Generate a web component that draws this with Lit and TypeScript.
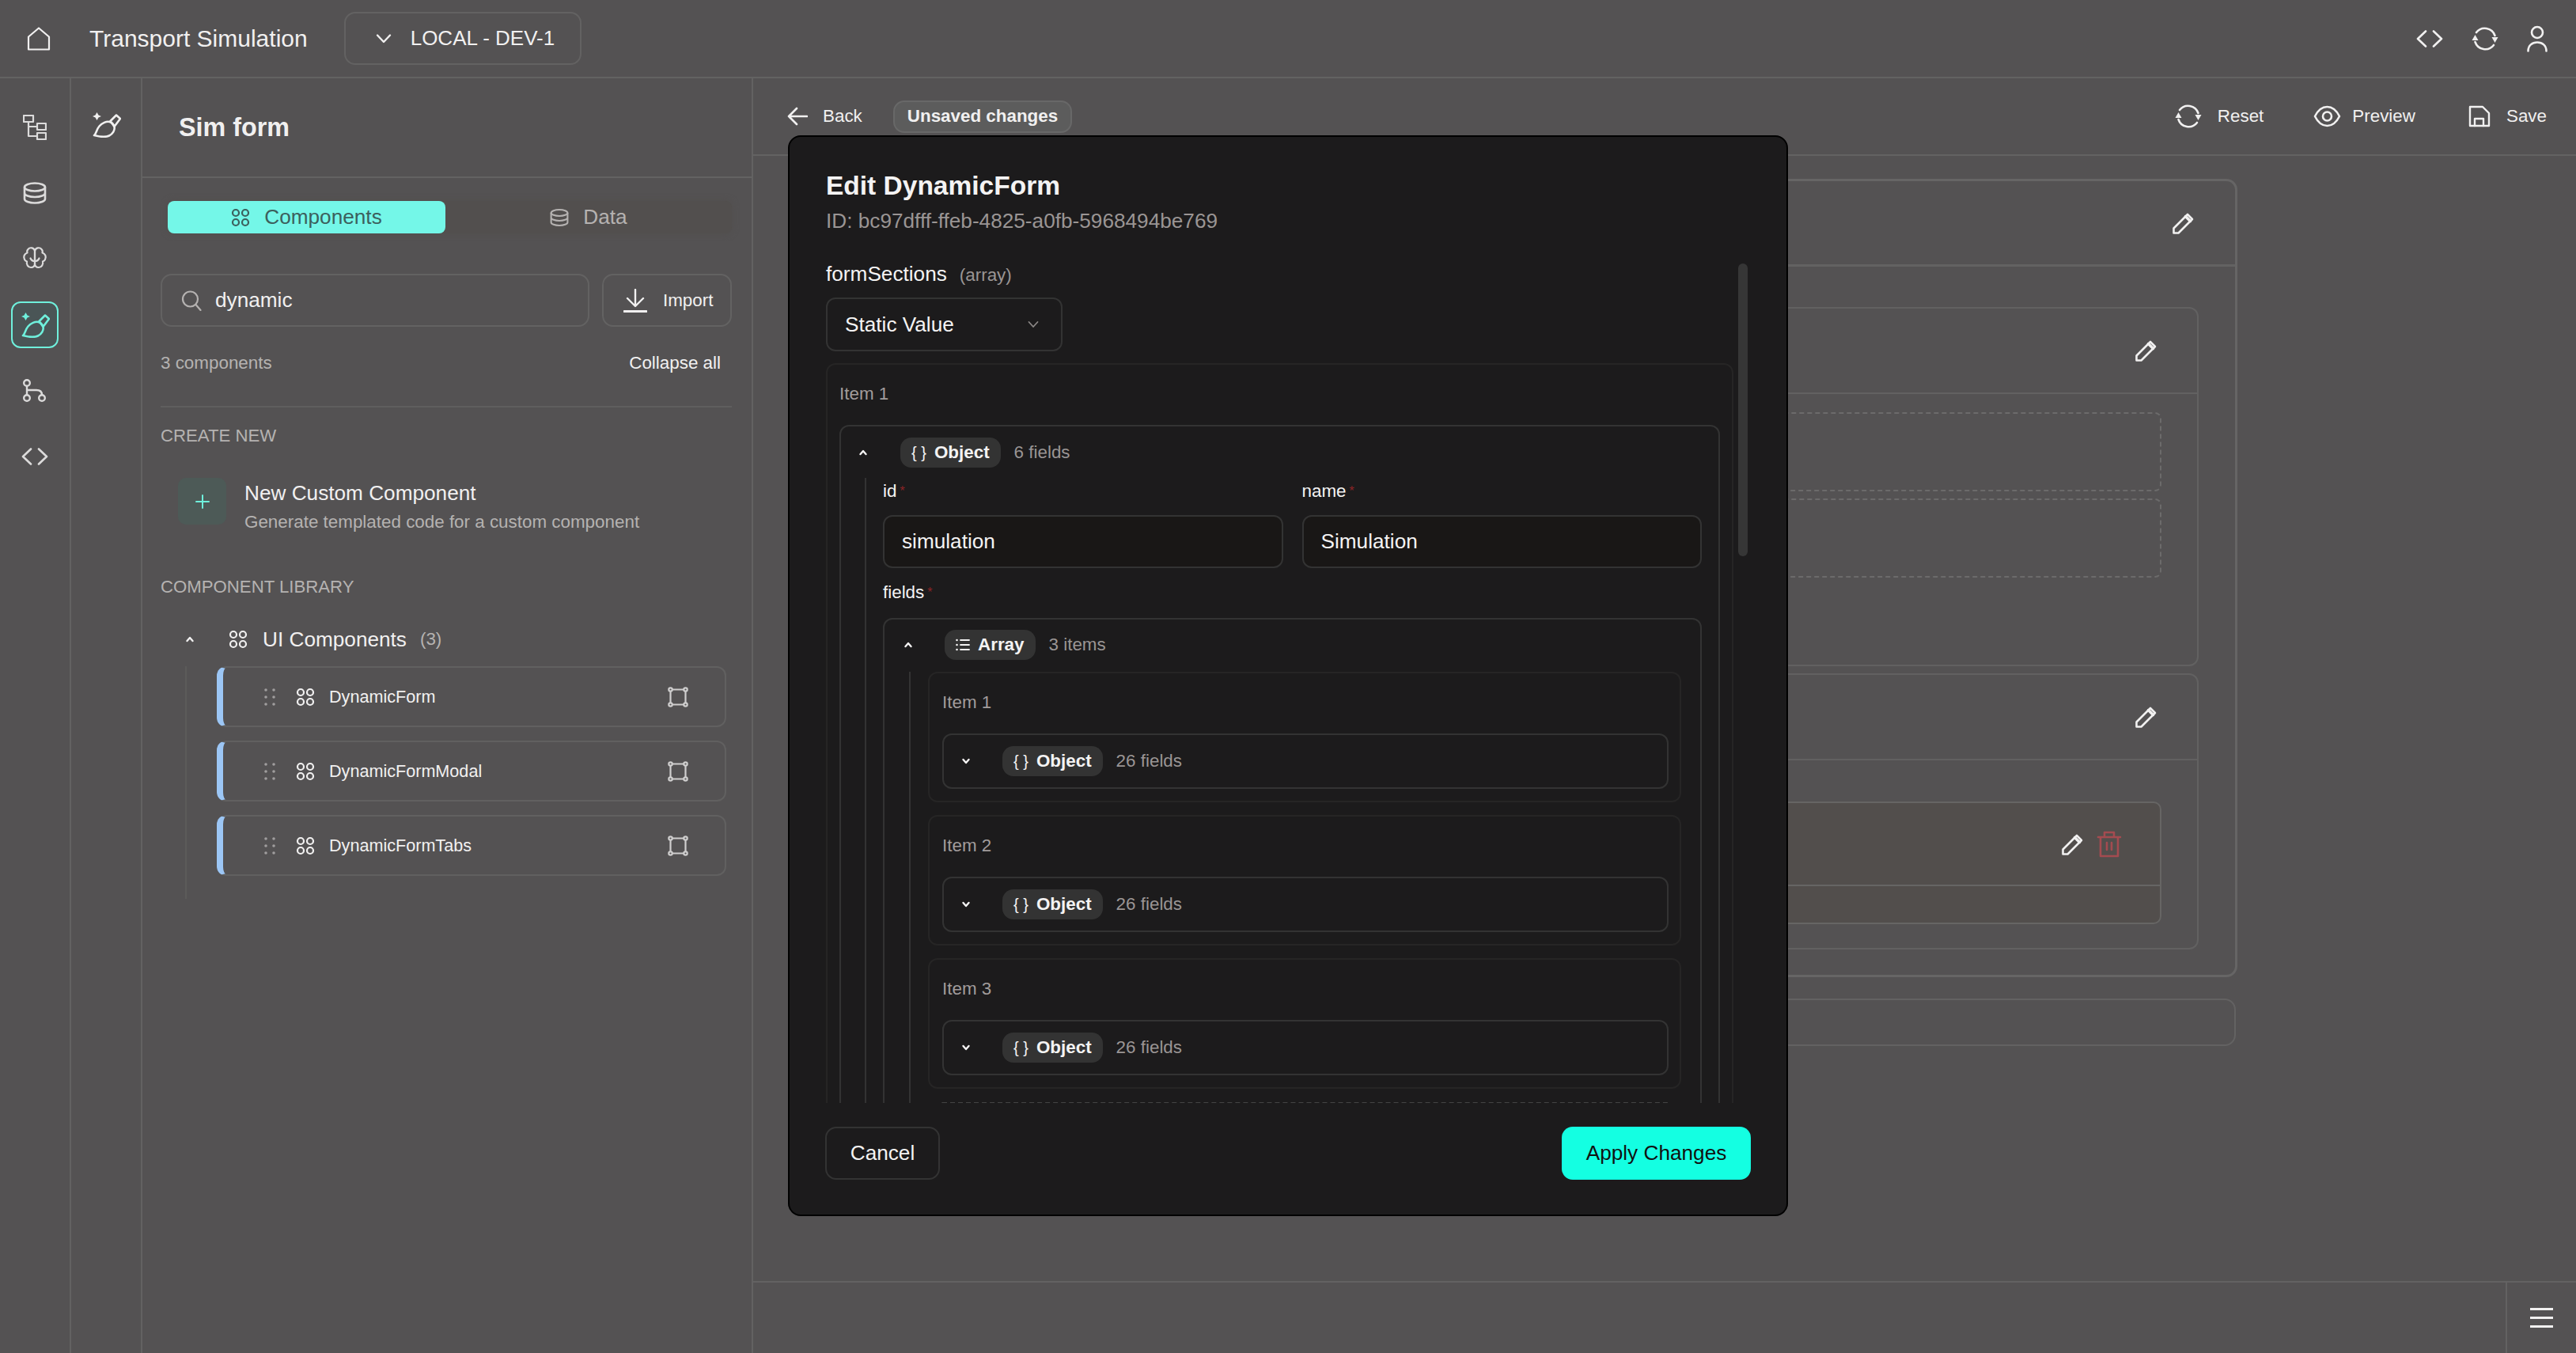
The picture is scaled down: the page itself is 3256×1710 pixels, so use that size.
import { LitElement, html, css, svg } from "lit";
import { customElement } from "lit/decorators.js";

const icon = (w: number, h: number, body: unknown, sw = 2.2) => html`<svg
  class="ic"
  width=${w}
  height=${h}
  viewBox="0 0 ${w} ${h}"
  fill="none"
  stroke="currentColor"
  stroke-width=${sw}
  stroke-linecap="round"
  stroke-linejoin="round"
>
  ${body}
</svg>`;

const homeIcon = icon(30, 30, svg`<path d="M2 12.5 15 1.5l13 11V28.5H2z"/>`);
const codeIcon = icon(34, 22, svg`<path d="M12 1.5 2 11l10 9.5M22 1.5 32 11l-10 9.5"/>`, 2.6);
const refreshIcon = icon(
  34,
  34,
  svg`<path d="M6 9A13.5 13.5 0 0 1 29.5 13"/><path d="M28 25A13.5 13.5 0 0 1 4.5 21"/>
    <path d="M25.5 15h8l-4 7z" fill="currentColor" stroke="none"/><path d="M.5 19h8l-4-7z" fill="currentColor" stroke="none"/>`,
  2.6,
);
const userIcon = icon(26, 34, svg`<circle cx="13" cy="9" r="7"/><path d="M1.5 32.5c0-7 5-11 11.5-11s11.5 4 11.5 11"/>`, 2.6);
const chevDown = icon(20, 14, svg`<path d="M2 2.5 10 11l8-8.5"/>`, 2.4);
const treeIcon = icon(
  30,
  32,
  svg`<rect x="1" y="1" width="12" height="8"/><rect x="18" y="11" width="11" height="8"/><rect x="18" y="23" width="11" height="8"/><path d="M7 9v18h11M7 15h11"/>`,
);
const dbIcon = (w = 30, h = 28) =>
  html`<svg class="ic" width=${w} height=${h} viewBox="0 0 30 28" fill="none" stroke="currentColor" stroke-width="2.6">
    <ellipse cx="15" cy="6.5" rx="13" ry="5" />
    <path d="M2 6.5v15c0 2.8 5.8 5 13 5s13-2.2 13-5v-15M2 14c0 2.8 5.8 5 13 5s13-2.2 13-5" />
  </svg>`;
const brainIcon = icon(
  32,
  32,
  svg`<path d="M16 6c-1-4-6-5-8.500-2-1 1-1.500 3-1 4.500-3.500 1-5.500 5-3.500 8.500.5 1 1.500 2 3 2.500-1 3.500 1.500 7.500 5 7.500 3 0 5-2 5-5z"/>
    <path d="M16 6c1-4 6-5 8.500-2 1 1 1.500 3 1 4.500 3.500 1 5.500 5 3.500 8.500-.5 1-1.500 2-3 2.500 1 3.500-1.500 7.500-5 7.500-3 0-5-2-5-5z"/>
    <path d="M16 19c-2.500 0-4.500-1-5.500-3.500M16 19c2.500 0 4.500-1 5.500-3.500"/>`,
);
const wandIcon = icon(
  37,
  32,
  svg`<path d="M6.500 0l2 3.500 3.500 1.500-3.500 1.500-2 3.500-2-3.500L1 5l3.500-1.500z" fill="currentColor" stroke="none"/>
    <path d="M3 29c2.500-1.500 3-7.500 6.500-11.500 3.500-4 9-6.500 13-5.500 2 .5 5 3 6 6 1 4.500-2 9.500-6.500 11.500-5 2.500-11.500 1.500-19-.5z"/>
    <path d="M23.500 11 31 3.500l5 4.500-7.500 10z"/>`,
  2.6,
);
const forkIcon = icon(
  32,
  32,
  svg`<circle cx="6" cy="6" r="3.800"/><circle cx="6" cy="25" r="3.800"/><circle cx="25" cy="25" r="3.800"/><path d="M6 10v11M6 15h12c4 0 7 2 7 6"/>`,
  2.4,
);
const compIcon = icon(
  24,
  24,
  svg`<circle cx="6" cy="6" r="4"/><circle cx="18" cy="6" r="4"/><circle cx="6" cy="18" r="4"/><circle cx="18" cy="18" r="4"/>`,
);
const searchIcon = icon(26, 26, svg`<circle cx="11.500" cy="11" r="9.500"/><path d="m18.500 18 6 7"/>`);
const importIcon = icon(30, 30, svg`<path d="M15 1v20M5 12l10 10 10-10"/><path d="M1 28.500h28" stroke-width="3"/>`, 2.4);
const plusIcon = icon(18, 18, svg`<path d="M9 1v16M1 9h16"/>`, 2);
const chevUpSm = icon(12, 10, svg`<path d="M2.500 7 6 3l3.500 4"/>`, 2.4);
const chevDownSm = icon(12, 10, svg`<path d="M2.500 3 6 7l3.500-4"/>`, 2.4);
const dotsIcon = icon(
  14,
  22,
  svg`<g fill="currentColor" stroke="none"><circle cx="2" cy="2" r="1.800"/><circle cx="12" cy="2" r="1.800"/><circle cx="2" cy="11" r="1.800"/><circle cx="12" cy="11" r="1.800"/><circle cx="2" cy="20" r="1.800"/><circle cx="12" cy="20" r="1.800"/></g>`,
);
const frameIcon = icon(
  26,
  26,
  svg`<path d="M6 3.500h14M6 22.500h14M3.500 6v14M22.500 6v14"/><circle cx="3.500" cy="3.500" r="2.200"/><circle cx="22.500" cy="3.500" r="2.200"/><circle cx="3.500" cy="22.500" r="2.200"/><circle cx="22.500" cy="22.500" r="2.200"/>`,
);
const backIcon = icon(26, 26, svg`<path d="M12 3 2 13l10 10M2 13h23"/>`, 2.6);
const eyeIcon = icon(35, 28, svg`<path d="M2 14C6 6 11 2 17.500 2S29 6 33 14c-4 8-9 12-15.500 12S6 22 2 14z"/><circle cx="17.500" cy="14" r="5.500"/>`, 2.6);
const saveIcon = icon(28, 28, svg`<path d="M2 2h16l8 8v16H2z"/><path d="M8 26v-9h11v9"/>`, 2.4);
const pencilIcon = icon(
  30,
  30,
  svg`<path d="M2.500 27.500v-6L20 4l6 6L8.500 27.500z"/><path d="m17.500 6.500 6 6" stroke-width="3.500"/>`,
  2.6,
);
const trashIcon = icon(
  32,
  34,
  svg`<path d="M2 8h28M5 8v24h22V8M10 8V2h12v6M13 15v9M19 15v9"/>`,
  2.6,
);
const listIcon = icon(
  18,
  18,
  svg`<path d="M6 3h11M6 9h11M6 15h11"/><g fill="currentColor" stroke="none"><circle cx="1.500" cy="3" r="1.300"/><circle cx="1.500" cy="9" r="1.300"/><circle cx="1.500" cy="15" r="1.300"/></g>`,
  1.8,
);

@customElement("app-root")
export class AppRoot extends LitElement {
  static styles = css`
    :host {
      display: block;
      width: 3256px;
      height: 1710px;
      position: relative;
      overflow: hidden;
      background: #545253;
      color: #f1f0f0;
      font-family: "Liberation Sans", Arial, sans-serif;
      font-size: 26.2px;
    }
    * {
      box-sizing: border-box;
    }
    .ic {
      display: block;
      flex: none;
    }
    .app {
      display: flex;
      flex-direction: column;
      height: 1710px;
    }

    /* top bar */
    .top {
      height: 99px;
      flex: none;
      display: flex;
      align-items: center;
      padding: 0 36px 0 34px;
      border-bottom: 2px solid #636262;
    }
    .brand {
      font-size: 30px;
      margin: 0 46px 0 49px;
    }
    .env {
      width: 300px;
      height: 67px;
      display: flex;
      align-items: center;
      gap: 24px;
      padding-left: 38px;
      border: 2px solid #636262;
      border-radius: 14px;
      font-size: 26px;
    }
    .top-right {
      margin-left: auto;
      display: flex;
      align-items: center;
      gap: 36px;
    }

    /* left rails */
    .body {
      flex: 1;
      display: flex;
      min-height: 0;
    }
    .rail {
      width: 90px;
      flex: none;
      border-right: 2px solid #636262;
      display: flex;
      flex-direction: column;
      align-items: center;
      gap: 24.4px;
      padding-top: 32px;
      color: #dcdbdb;
    }
    .rail-item {
      width: 60px;
      height: 59px;
      display: flex;
      align-items: center;
      justify-content: center;
      border-radius: 12px;
      border: 2px solid transparent;
    }
    .rail-item.on {
      color: #6ff0dc;
      border-color: #6ff0dc;
      background: #4a5556;
    }
    .rail.two {
      padding-top: 43px;
      color: #f1f0f0;
    }

    /* component panel */
    .panel {
      width: 772px;
      flex: none;
      border-right: 2px solid #636262;
      display: flex;
      flex-direction: column;
    }
    .panel-head {
      height: 126px;
      flex: none;
      display: flex;
      align-items: center;
      padding-left: 46px;
      border-bottom: 2px solid #636262;
      font-size: 32.3px;
      font-weight: 700;
    }
    .panel-body {
      padding: 0 25px 0 23px;
    }
    .tabs {
      margin: 29px 0 0 9px;
      height: 41px;
      display: flex;
      background: #524f4e;
      border-radius: 8px;
      box-shadow: 0 0 8px #524f4e;
    }
    .tab {
      flex: 1;
      display: flex;
      align-items: center;
      justify-content: center;
      gap: 18px;
      color: #b5b2b1;
      border-radius: 8px;
    }
    .tab.on {
      flex: none;
      width: 351px;
      background: #74f7e8;
      color: #3c605d;
    }
    .search-row {
      margin-top: 51px;
      display: flex;
      gap: 16px;
      height: 67px;
    }
    .search {
      flex: 1;
      display: flex;
      align-items: center;
      gap: 17px;
      padding-left: 24px;
      border: 2px solid #636262;
      border-radius: 14px;
    }
    .search .ic {
      color: #b5b2b1;
    }
    .import {
      width: 164px;
      display: flex;
      align-items: center;
      gap: 20px;
      padding-left: 25px;
      border: 2px solid #636262;
      border-radius: 14px;
      font-size: 22.4px;
    }
    .count-row {
      margin-top: 33px;
      display: flex;
      justify-content: space-between;
      padding-right: 14px;
      font-size: 22.4px;
      line-height: 26px;
    }
    .muted {
      color: #b5b2b1;
    }
    .rule {
      margin: 41px 0 23px;
      border-top: 2px solid #5f5e5e;
    }
    .section {
      font-size: 22.2px;
      line-height: 26px;
      color: #b5b2b1;
    }
    .new-row {
      margin: 40px 0 0 22px;
      display: flex;
      gap: 23px;
    }
    .new-box {
      width: 61px;
      height: 59px;
      display: flex;
      align-items: center;
      justify-content: center;
      background: #4d5a57;
      border-radius: 10px;
      color: #6ff0dc;
    }
    .new-title {
      margin-top: 4px;
      line-height: 30px;
    }
    .new-sub {
      margin-top: 9px;
      font-size: 22.4px;
      line-height: 26px;
      color: #b5b2b1;
    }
    .lib {
      margin-top: 56px;
    }
    .group {
      margin-top: 38px;
      height: 30px;
      display: flex;
      align-items: center;
      padding-left: 31px;
    }
    .group > .ic:first-child {
      margin-right: 43px;
    }
    .group-name {
      margin: 0 17px 0 19px;
    }
    .tree {
      margin: 19px 0 0 31px;
      padding: 0 7px 29px 38px;
      border-left: 2px solid #5c5b5a;
      display: flex;
      flex-direction: column;
      gap: 17px;
    }
    .card {
      height: 77px;
      display: flex;
      align-items: center;
      padding: 0 46px 0 52px;
      border: 2px solid #616060;
      border-left: 8px solid #9cc6f5;
      border-radius: 12px;
      font-size: 21.6px;
    }
    .card .drag {
      color: #a09e9e;
      margin-right: 26px;
    }
    .card .name {
      margin-left: 18px;
      flex: 1;
    }
    .card .frame {
      color: #cfcece;
    }

    /* main area */
    .main {
      flex: 1;
      min-width: 0;
      display: flex;
      flex-direction: column;
    }
    .toolbar {
      height: 98px;
      flex: none;
      display: flex;
      align-items: center;
      padding: 0 37px 0 43px;
      border-bottom: 2px solid #636262;
      font-size: 22.4px;
    }
    .back {
      display: flex;
      align-items: center;
      gap: 19px;
    }
    .unsaved {
      margin-left: 39px;
      height: 41px;
      display: flex;
      align-items: center;
      padding: 0 16px;
      background: #5c5c5c;
      border: 2px solid #686868;
      border-radius: 14px;
      font-weight: 700;
    }
    .actions {
      margin-left: auto;
      display: flex;
      align-items: center;
      gap: 63px;
    }
    .action {
      display: flex;
      align-items: center;
      gap: 20px;
    }
    .action.preview {
      gap: 14px;
    }
    .action.save {
      margin-left: 4px;
    }
    .canvas {
      flex: 1;
      min-height: 0;
      padding: 29px 428px 0 48px;
    }
    .outer {
      height: 1009px;
      border: 3px solid #666565;
      border-radius: 14px;
    }
    .outer-head {
      height: 108px;
      display: flex;
      align-items: center;
      justify-content: flex-end;
      padding-right: 50px;
      border-bottom: 3px solid #636262;
    }
    .outer-body {
      padding: 51px 46px 0;
      display: flex;
      flex-direction: column;
      gap: 9px;
    }
    .box {
      border: 2px solid #626161;
      border-radius: 12px;
    }
    .box-head {
      height: 108px;
      display: flex;
      align-items: center;
      justify-content: flex-end;
      padding-right: 49px;
      border-bottom: 2px solid #626161;
    }
    .slots {
      padding: 23px 45px 110px;
      display: flex;
      flex-direction: column;
      gap: 9px;
    }
    .slot {
      height: 100px;
      border: 2px dashed #6c6b6b;
      border-radius: 8px;
    }
    .box-body {
      padding: 52px 45px 30px;
    }
    .leaf {
      border: 2px solid #666564;
      border-radius: 10px;
      background: #524e4c;
    }
    .leaf-head {
      height: 105px;
      display: flex;
      align-items: center;
      justify-content: flex-end;
      gap: 15px;
      padding-right: 48px;
      border-bottom: 2px solid #666564;
    }
    .leaf-foot {
      height: 46px;
    }
    .trash {
      color: #a34b50;
    }
    .strip {
      margin-top: 27px;
      height: 60px;
      width: 1826px;
      border: 2px solid #636262;
      border-radius: 14px;
    }
    .bottom {
      height: 91px;
      flex: none;
      display: flex;
      justify-content: flex-end;
      border-top: 2px solid #636262;
    }
    .menu {
      width: 89px;
      display: flex;
      flex-direction: column;
      align-items: center;
      justify-content: center;
      gap: 8px;
      border-left: 2px solid #636262;
    }
    .menu i {
      display: block;
      width: 29px;
      height: 3px;
      background: #f1f0f0;
    }

    /* modal */
    .modal {
      position: absolute;
      left: 996px;
      top: 171px;
      width: 1264px;
      height: 1366px;
      display: flex;
      flex-direction: column;
      background: #1c1b1c;
      border: 2px solid #000;
      border-radius: 16px;
      color: #f4f3f3;
    }
    .modal-head {
      flex: none;
      padding: 42px 46px 37px;
    }
    .modal-title {
      font-size: 33.5px;
      font-weight: 700;
      line-height: 40px;
    }
    .modal-id {
      margin-top: 9px;
      line-height: 30px;
      color: #9a9594;
    }
    .scroll {
      flex: 1;
      min-height: 0;
      position: relative;
      overflow: hidden;
      padding: 0 67px 0 46px;
    }
    .thumb {
      position: absolute;
      left: 1199px;
      top: 2px;
      width: 12px;
      height: 370px;
      border-radius: 6px;
      background: #363636;
    }
    .prop {
      display: flex;
      align-items: baseline;
      gap: 16px;
      line-height: 30px;
    }
    .hint {
      font-size: 22.4px;
      color: #9a9594;
    }
    .group .hint {
      color: #b5b2b1;
    }
    .select {
      margin-top: 13px;
      width: 299px;
      height: 68px;
      display: flex;
      align-items: center;
      justify-content: space-between;
      padding: 0 28px 0 22px;
      border: 2px solid #333;
      border-radius: 12px;
    }
    .select .ic {
      color: #8b8786;
    }
    .item-outer {
      margin-top: 15px;
      padding: 24px 15px 0;
      border: 2px solid #262525;
      border-radius: 12px;
    }
    .item-label {
      font-size: 22.4px;
      line-height: 26px;
      color: #a19c9b;
    }
    .obj {
      margin-top: 26px;
      border: 2px solid #333;
      border-radius: 12px;
    }
    .obj-head {
      display: flex;
      align-items: center;
      padding: 14px 0 0 22px;
    }
    .obj-head > .ic {
      margin-right: 41px;
    }
    .obj.arr .obj-head {
      padding: 13px 0 0 24px;
    }
    .obj.arr .obj-head > .ic {
      margin-right: 40px;
    }
    .badge {
      height: 38px;
      display: flex;
      align-items: center;
      gap: 10px;
      padding: 0 14px;
      margin-right: 17px;
      background: #333;
      border-radius: 14px;
      font-size: 22.4px;
      font-weight: 700;
    }
    .badge span {
      font-size: 20px;
      font-weight: 400;
    }
    .fields {
      font-size: 22.4px;
      color: #9a9594;
    }
    .children {
      margin: 13px 0 0 30px;
      padding: 4px 21px 0 21px;
      border-left: 2px solid #333;
    }
    .label {
      font-size: 22.4px;
      line-height: 26px;
    }
    .label em {
      color: #8c2426;
      font-style: normal;
      font-size: 16px;
      vertical-align: top;
      margin-left: 4px;
    }
    .cols {
      display: grid;
      grid-template-columns: 1fr 1fr;
      gap: 0 24px;
    }
    .input {
      margin-top: 17px;
      height: 67px;
      display: flex;
      align-items: center;
      padding-left: 22px;
      background: #191716;
      border: 2px solid #333;
      border-radius: 12px;
    }
    .fields-label {
      margin-top: 18px;
    }
    .obj.arr {
      margin-top: 19px;
    }
    .items {
      margin: 15px 0 0 31px;
      padding: 0 24px 0 22px;
      border-left: 2px solid #333;
      display: flex;
      flex-direction: column;
      gap: 16px;
    }
    .sub {
      padding: 24px 14px 15px 16px;
      border: 2px solid #262525;
      border-radius: 12px;
    }
    .sub-obj {
      margin-top: 26px;
      height: 70px;
      display: flex;
      align-items: center;
      padding-left: 22px;
      border: 2px solid #333;
      border-radius: 12px;
    }
    .sub-obj > .ic {
      margin-right: 40px;
    }
    .add {
      margin: 1px 6px 0;
      height: 60px;
      border: 2px dashed #444;
      border-radius: 12px;
    }
    .modal-foot {
      flex: none;
      display: flex;
      justify-content: space-between;
      padding: 30px 45px 44px 45px;
    }
    .btn {
      height: 67px;
      display: flex;
      align-items: center;
      justify-content: center;
      border-radius: 14px;
    }
    .btn.cancel {
      width: 145px;
      border: 2px solid #333;
    }
    .btn.apply {
      width: 239px;
      background: #14ffe2;
      color: #111;
    }
  `;

  private subItem(n: number) {
    return html`<div class="sub">
      <div class="item-label">Item ${n}</div>
      <div class="sub-obj">
        ${chevDownSm}
        <div class="badge"><span>{ }</span>Object</div>
        <div class="fields">26 fields</div>
      </div>
    </div>`;
  }

  private libCard(name: string) {
    return html`<div class="card">
      <div class="drag">${dotsIcon}</div>
      ${compIcon}
      <div class="name">${name}</div>
      <div class="frame">${frameIcon}</div>
    </div>`;
  }

  render() {
    return html`
      <div class="app">
        <header class="top">
          ${homeIcon}
          <div class="brand">Transport Simulation</div>
          <div class="env">${chevDown}<span>LOCAL - DEV-1</span></div>
          <div class="top-right">${codeIcon}${refreshIcon}${userIcon}</div>
        </header>
        <div class="body">
          <nav class="rail">
            <div class="rail-item">${treeIcon}</div>
            <div class="rail-item">${dbIcon()}</div>
            <div class="rail-item">${brainIcon}</div>
            <div class="rail-item on">${wandIcon}</div>
            <div class="rail-item">${forkIcon}</div>
            <div class="rail-item">${codeIcon}</div>
          </nav>
          <nav class="rail two">${wandIcon}</nav>
          <aside class="panel">
            <div class="panel-head">Sim form</div>
            <div class="panel-body">
              <div class="tabs">
                <div class="tab on">${compIcon}Components</div>
                <div class="tab">${dbIcon(24, 24)}Data</div>
              </div>
              <div class="search-row">
                <div class="search">${searchIcon}<span>dynamic</span></div>
                <div class="import">${importIcon}<span>Import</span></div>
              </div>
              <div class="count-row">
                <span class="muted">3 components</span>
                <span>Collapse all</span>
              </div>
              <div class="rule"></div>
              <div class="section">CREATE NEW</div>
              <div class="new-row">
                <div class="new-box">${plusIcon}</div>
                <div>
                  <div class="new-title">New Custom Component</div>
                  <div class="new-sub">Generate templated code for a custom component</div>
                </div>
              </div>
              <div class="section lib">COMPONENT LIBRARY</div>
              <div class="group">
                ${chevUpSm}${compIcon}
                <span class="group-name">UI Components</span>
                <span class="hint">(3)</span>
              </div>
              <div class="tree">
                ${this.libCard("DynamicForm")} ${this.libCard("DynamicFormModal")}
                ${this.libCard("DynamicFormTabs")}
              </div>
            </div>
          </aside>
          <main class="main">
            <div class="toolbar">
              <div class="back">${backIcon}<span>Back</span></div>
              <div class="unsaved">Unsaved changes</div>
              <div class="actions">
                <div class="action">${refreshIcon}<span>Reset</span></div>
                <div class="action preview">${eyeIcon}<span>Preview</span></div>
                <div class="action save">${saveIcon}<span>Save</span></div>
              </div>
            </div>
            <div class="canvas">
              <div class="outer">
                <div class="outer-head">${pencilIcon}</div>
                <div class="outer-body">
                  <div class="box">
                    <div class="box-head">${pencilIcon}</div>
                    <div class="slots">
                      <div class="slot"></div>
                      <div class="slot"></div>
                    </div>
                  </div>
                  <div class="box">
                    <div class="box-head">${pencilIcon}</div>
                    <div class="box-body">
                      <div class="leaf">
                        <div class="leaf-head">${pencilIcon}<span class="trash">${trashIcon}</span></div>
                        <div class="leaf-foot"></div>
                      </div>
                    </div>
                  </div>
                </div>
              </div>
              <div class="strip"></div>
            </div>
            <div class="bottom">
              <div class="menu"><i></i><i></i><i></i></div>
            </div>
          </main>
        </div>
      </div>

      <section class="modal">
        <div class="modal-head">
          <div class="modal-title">Edit DynamicForm</div>
          <div class="modal-id">ID: bc97dfff-ffeb-4825-a0fb-5968494be769</div>
        </div>
        <div class="scroll">
          <div class="thumb"></div>
          <div class="prop"><span>formSections</span><span class="hint">(array)</span></div>
          <div class="select"><span>Static Value</span>${icon(14, 10, svg`<path d="M1.500 2 7 8l5.500-6"/>`, 1.8)}</div>
          <div class="item-outer">
            <div class="item-label">Item 1</div>
            <div class="obj">
              <div class="obj-head">
                ${chevUpSm}
                <div class="badge"><span>{ }</span>Object</div>
                <div class="fields">6 fields</div>
              </div>
              <div class="children">
                <div class="cols">
                  <div>
                    <div class="label">id<em>*</em></div>
                    <div class="input">simulation</div>
                  </div>
                  <div>
                    <div class="label">name<em>*</em></div>
                    <div class="input">Simulation</div>
                  </div>
                </div>
                <div class="label fields-label">fields<em>*</em></div>
                <div class="obj arr">
                  <div class="obj-head">
                    ${chevUpSm}
                    <div class="badge">${listIcon}Array</div>
                    <div class="fields">3 items</div>
                  </div>
                  <div class="items">
                    ${this.subItem(1)} ${this.subItem(2)} ${this.subItem(3)}
                    <div class="add"></div>
                  </div>
                </div>
              </div>
            </div>
          </div>
        </div>
        <div class="modal-foot">
          <div class="btn cancel">Cancel</div>
          <div class="btn apply">Apply Changes</div>
        </div>
      </section>
    `;
  }
}
